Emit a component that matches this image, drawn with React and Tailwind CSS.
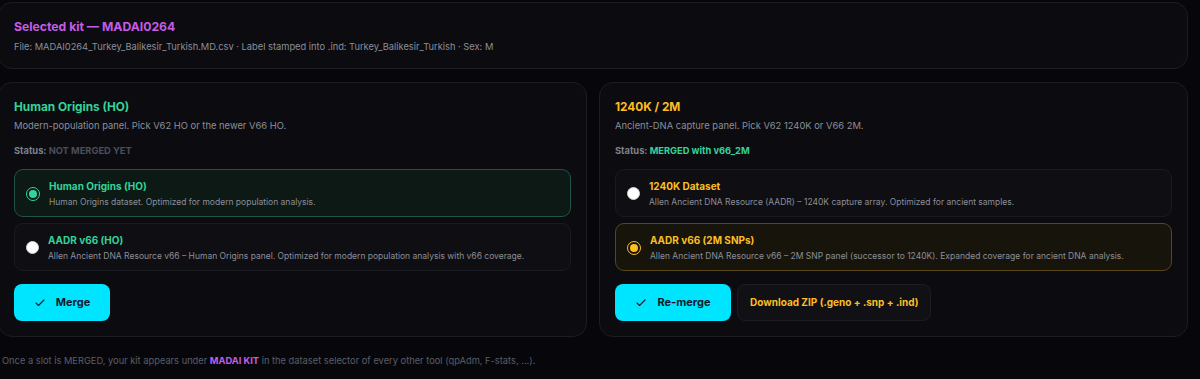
import React from "react"
import { Check } from "lucide-react"

const Radio = ({ checked, tone }) => {
  if (!checked) {
    return <span className="w-[13px] h-[13px] rounded-full bg-white border border-[#d4d4d8] flex-shrink-0" />
  }
  const ring = tone === "green" ? "border-[#34d399]" : "border-[#fbbf24]"
  const dot = tone === "green" ? "bg-[#34d399]" : "bg-[#fbbf24]"
  return (
    <span className={`w-[14px] h-[14px] rounded-full border-[1.5px] ${ring} flex items-center justify-center flex-shrink-0`}>
      <span className={`w-[8px] h-[8px] rounded-full ${dot}`} />
    </span>
  )
}

const Option = ({ title, desc, checked, tone }) => {
  const titleColor = tone === "green" ? "text-[#34d399]" : "text-[#fbbf24]"
  let box = "border-[#1a1a21] bg-[#0e0e13]"
  if (checked && tone === "green") box = "border-[#1f5443] bg-[#0c1915]"
  if (checked && tone === "amber") box = "border-[#5a4718] bg-[#17140b]"
  return (
    <div className={`flex items-center gap-[9px] rounded-[9px] border ${box} pl-[11px] pr-3 pt-[9px] pb-[8px]`}>
      <Radio checked={checked} tone={tone} />
      <div className="min-w-0">
        <p className={`text-[10px] leading-[14px] font-bold ${titleColor}`}>{title}</p>
        <p className="text-[8.5px] leading-[12px] mt-[3px] text-[#8c8f98]">{desc}</p>
      </div>
    </div>
  )
}

const Panel = ({ title, titleColor, subtitle, status, statusColor, options, children }) => (
  <div className="rounded-[14px] border border-[#1c1c24] bg-[#0b0b10] px-[15px] pt-[16px] pb-[15px]">
    <h3 className={`text-[11.8px] leading-[16px] font-bold ${titleColor}`}>{title}</h3>
    <p className="text-[9.4px] leading-[14px] mt-[4px] text-[#8c8f98]">{subtitle}</p>
    <p className="text-[9.3px] leading-[12px] mt-[12px] font-bold text-[#7d818b]">
      Status: <span className={statusColor}>{status}</span>
    </p>
    <div className="mt-[12px] flex flex-col gap-[6px]">
      {options.map((o) => (
        <Option key={o.title} {...o} />
      ))}
    </div>
    <div className="mt-[13px] flex items-center gap-[6px]">{children}</div>
  </div>
)

export default function App() {
  return (
    <div className="min-h-screen bg-[#07070b] font-['Inter',sans-serif]">
      <div className="ml-[-2px] w-[1190px] pt-[2px]">
        {/* Selected kit */}
        <div className="rounded-[14px] border border-[#1c1c24] bg-[#0b0b10] px-[15px] pt-[16px] pb-[15px]">
          <h2 className="text-[12.2px] leading-[16px] font-bold text-[#c45ce8]">Selected kit — MADAI0264</h2>
          <p className="text-[9.3px] leading-[12px] mt-[6px] text-[#8c8f98]">
            File: MADAI0264_Turkey_Balikesir_Turkish.MD.csv · Label stamped into .ind: Turkey_Balikesir_Turkish · Sex: M
          </p>
        </div>

        <div className="grid grid-cols-2 gap-3 mt-[13px]">
          <Panel
            title="Human Origins (HO)"
            titleColor="text-[#34d399]"
            subtitle="Modern-population panel. Pick V62 HO or the newer V66 HO."
            status="NOT MERGED YET"
            statusColor="text-[#4a4e5a]"
            options={[
              {
                title: "Human Origins (HO)",
                desc: "Human Origins dataset. Optimized for modern population analysis.",
                checked: true,
                tone: "green",
              },
              {
                title: "AADR v66 (HO)",
                desc: "Allen Ancient DNA Resource v66 – Human Origins panel. Optimized for modern population analysis with v66 coverage.",
                checked: false,
                tone: "green",
              },
            ]}
          >
            <button className="h-[37px] w-[96px] rounded-[8px] bg-[#00e5ff] flex items-center justify-center gap-[10px] text-[11px] font-bold text-[#0b1b2b]">
              <Check className="w-[12px] h-[12px]" strokeWidth={2.25} />
              Merge
            </button>
          </Panel>

          <Panel
            title="1240K / 2M"
            titleColor="text-[#fbbf24]"
            subtitle="Ancient-DNA capture panel. Pick V62 1240K or V66 2M."
            status="MERGED with v66_2M"
            statusColor="text-[#34d399]"
            options={[
              {
                title: "1240K Dataset",
                desc: "Allen Ancient DNA Resource (AADR) – 1240K capture array. Optimized for ancient samples.",
                checked: false,
                tone: "amber",
              },
              {
                title: "AADR v66 (2M SNPs)",
                desc: "Allen Ancient DNA Resource v66 – 2M SNP panel (successor to 1240K). Expanded coverage for ancient DNA analysis.",
                checked: true,
                tone: "amber",
              },
            ]}
          >
            <button className="h-[37px] w-[116px] rounded-[8px] bg-[#00e5ff] flex items-center justify-center gap-[10px] text-[11px] font-bold text-[#0b1b2b]">
              <Check className="w-[12px] h-[12px]" strokeWidth={2.25} />
              Re-merge
            </button>
            <button className="h-[37px] px-[12px] rounded-[8px] border border-[#1c1c23] bg-[#101015] text-[10px] font-bold text-[#fbbf24]">
              Download ZIP (.geno + .snp + .ind)
            </button>
          </Panel>
        </div>

        <p className="ml-[4px] mt-[18px] text-[9.3px] leading-[12px] text-[#5a5e69]">
          Once a slot is MERGED, your kit appears under <span className="font-bold text-[#c45ce8]">MADAI KIT</span> in the
          dataset selector of every other tool (qpAdm, F-stats, ...).
        </p>
      </div>
    </div>
  )
}
